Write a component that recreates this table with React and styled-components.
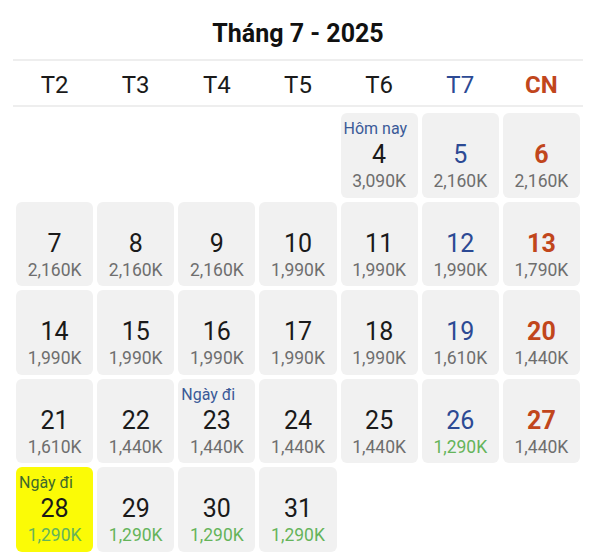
import styled, { createGlobalStyle } from "styled-components";

const GlobalStyle = createGlobalStyle`
  body {
    margin: 0;
    background: #ffffff;
    font-family: Roboto, "Noto Sans", sans-serif;
  }
`;

const weekdays = [
  { label: "T2" }, { label: "T3" }, { label: "T4" }, { label: "T5" },
  { label: "T6" }, { label: "T7", tone: "sat" }, { label: "CN", tone: "sun" },
];

const days = [
  null, null, null, null,
  { d: 4, p: "3,090K", tag: "Hôm nay" },
  { d: 5, p: "2,160K" },
  { d: 6, p: "2,160K" },
  { d: 7, p: "2,160K" },
  { d: 8, p: "2,160K" },
  { d: 9, p: "2,160K" },
  { d: 10, p: "1,990K" },
  { d: 11, p: "1,990K" },
  { d: 12, p: "1,990K" },
  { d: 13, p: "1,790K" },
  { d: 14, p: "1,990K" },
  { d: 15, p: "1,990K" },
  { d: 16, p: "1,990K" },
  { d: 17, p: "1,990K" },
  { d: 18, p: "1,990K" },
  { d: 19, p: "1,610K" },
  { d: 20, p: "1,440K" },
  { d: 21, p: "1,610K" },
  { d: 22, p: "1,440K" },
  { d: 23, p: "1,440K", tag: "Ngày đi" },
  { d: 24, p: "1,440K" },
  { d: 25, p: "1,440K" },
  { d: 26, p: "1,290K", cheap: true },
  { d: 27, p: "1,440K" },
  { d: 28, p: "1,290K", cheap: true, tag: "Ngày đi", picked: true },
  { d: 29, p: "1,290K", cheap: true },
  { d: 30, p: "1,290K", cheap: true },
  { d: 31, p: "1,290K", cheap: true },
];

const toneColor = (tone) =>
  tone === "sat" ? "#2c4a94" : tone === "sun" ? "#c1461c" : "#1a1a1a";

export default function App() {
  return (
    <Page>
      <GlobalStyle />
      <Title>Tháng 7 - 2025</Title>
      <WeekRow>
        {weekdays.map((w) => (
          <WeekDay key={w.label} $tone={w.tone}>{w.label}</WeekDay>
        ))}
      </WeekRow>
      <Grid>
        {days.map((day, i) => {
          if (!day) return <Empty key={"e" + i} />;
          const col = i % 7;
          const tone = col === 5 ? "sat" : col === 6 ? "sun" : undefined;
          return (
            <Cell key={day.d} $picked={day.picked}>
              <Tag $picked={day.picked}>{day.tag}</Tag>
              <DayNum $tone={tone}>{day.d}</DayNum>
              <Price $cheap={day.cheap}>{day.p}</Price>
            </Cell>
          );
        })}
      </Grid>
    </Page>
  );
}

const Page = styled.div`
  width: 591px;
  height: 559px;
  box-sizing: border-box;
  padding: 0 8px 0 13px;
  display: flex;
  flex-direction: column;
`;

const Title = styled.h1`
  margin: 0;
  height: 51px;
  padding-top: 8px;
  display: flex;
  align-items: center;
  justify-content: center;
  font-size: 25px;
  font-weight: 700;
  color: #111;
`;

const WeekRow = styled.div`
  display: grid;
  grid-template-columns: repeat(7, 1fr);
  column-gap: 4px;
  padding: 3px 3px 0;
  height: 41px;
  border-top: 2px solid #eeeeee;
  border-bottom: 2px solid #eeeeee;
`;

const WeekDay = styled.div`
  display: flex;
  align-items: center;
  justify-content: center;
  font-size: 24px;
  font-weight: ${(p) => (p.$tone === "sun" ? 700 : 400)};
  color: ${(p) => toneColor(p.$tone)};
`;

const Grid = styled.div`
  display: grid;
  grid-template-columns: repeat(7, 1fr);
  grid-auto-rows: 84.5px;
  gap: 4px;
  padding: 6px 3px 0 3px;
`;

const Empty = styled.div``;

const Cell = styled.div`
  background: ${(p) => (p.$picked ? "#fbfb06" : "#f1f1f1")};
  border-radius: 6px;
  padding: 4px 0 0 0;
  display: flex;
  flex-direction: column;
  align-items: center;
`;

const Tag = styled.div`
  align-self: flex-start;
  padding-left: 3px;
  height: 24px;
  line-height: 24px;
  font-size: 16px;
  color: ${(p) => (p.$picked ? "#3e6a2c" : "#3a5a98")};
`;

const DayNum = styled.div`
  height: 28px;
  line-height: 28px;
  font-size: 25px;
  font-weight: ${(p) => (p.$tone === "sun" ? 700 : 400)};
  color: ${(p) => toneColor(p.$tone)};
`;

const Price = styled.div`
  height: 24px;
  line-height: 24px;
  font-size: 17.5px;
  color: ${(p) => (p.$cheap ? "#65b45a" : "#6e6e6e")};
`;
